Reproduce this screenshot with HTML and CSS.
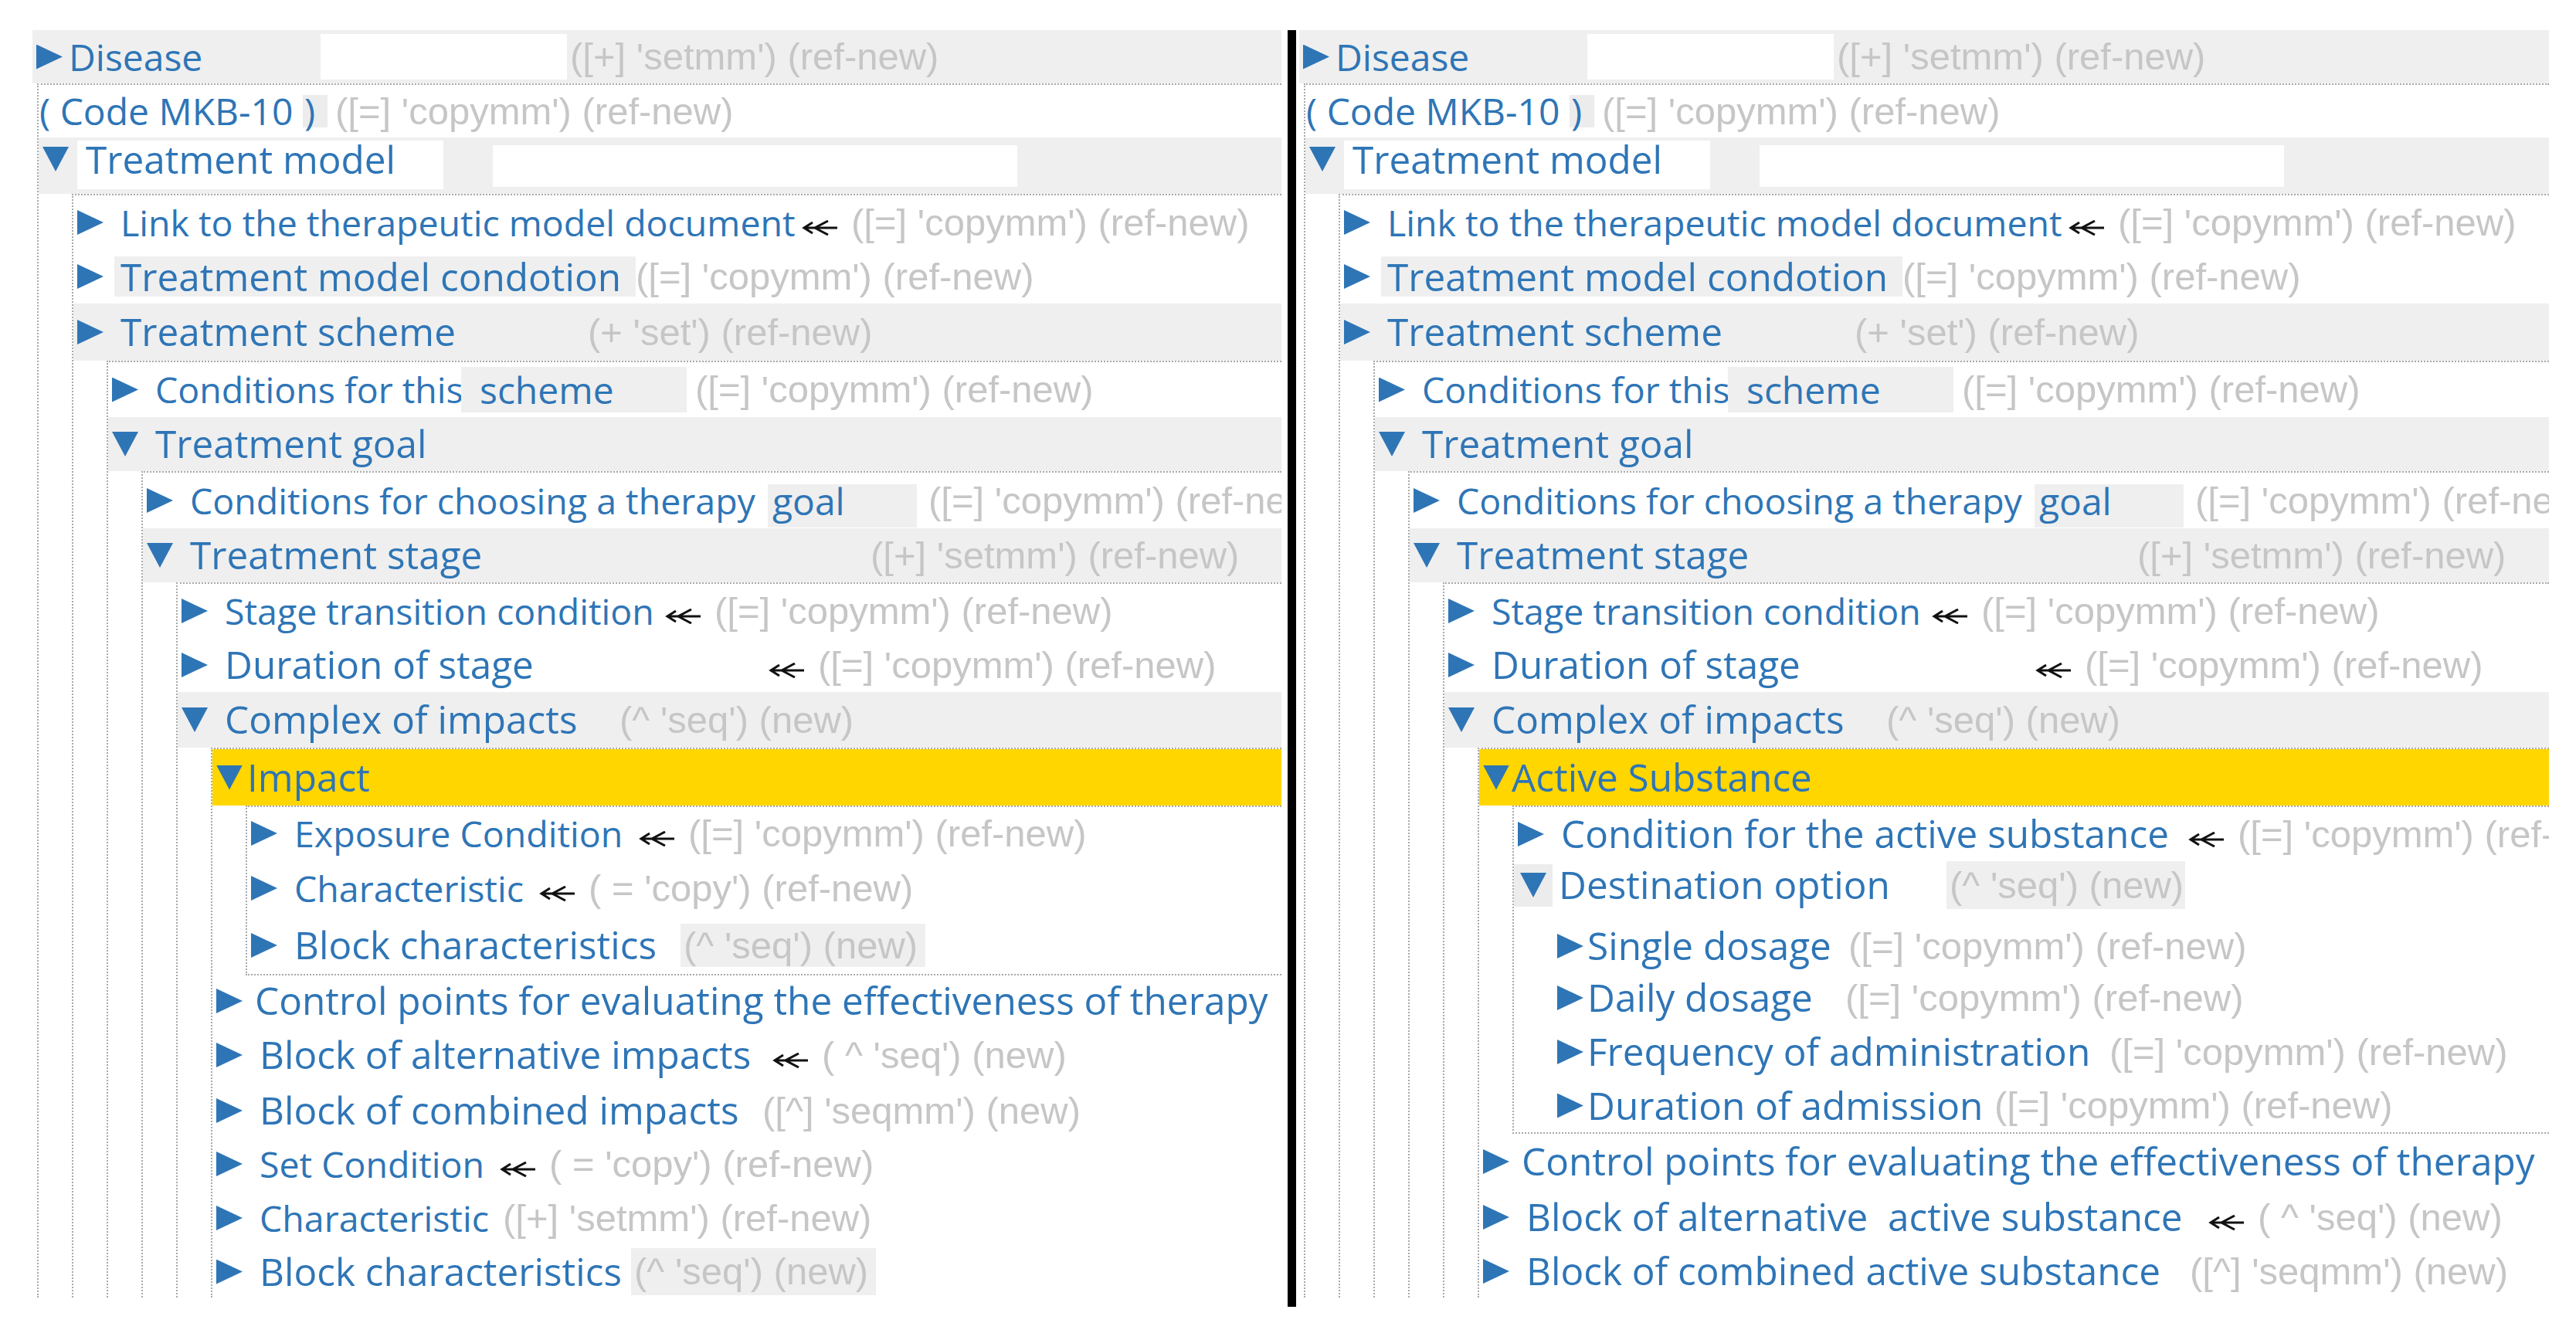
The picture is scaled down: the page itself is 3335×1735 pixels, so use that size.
FILE: index.html
```html
<!DOCTYPE html>
<html lang="en">
<head>
<meta charset="utf-8">
<title>Treatment model tree</title>
<link rel="stylesheet" href="styles.css">
</head>
<body>
<div class="screen">

  <section class="panel">
    <div class="row h69 shade n-disease">
      <span class="tri r"></span><span class="lbl">Disease</span><span class="field"></span><span class="meta">([+] 'setmm') (ref-new)</span>
    </div>
    <div class="kids top">
      <div class="row h68 n-code">
        <span class="lbl">( Code MKB-10 <span class="pbox">)</span></span><span class="meta">([=] 'copymm') (ref-new)</span>
      </div>
      <div class="row h73 shade n-model">
        <span class="tri d"></span><span class="lbl">Treatment model</span><span class="field"></span>
      </div>
      <div class="kids">
        <div class="row n-link">
          <span class="tri r"></span><span class="lbl alt">Link to the therapeutic model document</span><svg class="arrow" viewBox="0 0 48 20"><path d="M3 10H46M14 3 3 10l11 7M34 1 17 10l17 9"/></svg><span class="meta">([=] 'copymm') (ref-new)</span>
        </div>
        <div class="row n-cond">
          <span class="tri r"></span><span class="lbl">Treatment model condotion</span><span class="meta">([=] 'copymm') (ref-new)</span>
        </div>
        <div class="row h74 shade n-scheme">
          <span class="tri r"></span><span class="lbl">Treatment scheme</span><span class="meta">(+ 'set') (ref-new)</span>
        </div>
        <div class="kids">
          <div class="row h71 n-forthis">
            <span class="tri r"></span><span class="lbl alt">Conditions for this</span><span class="chip chip-scheme">scheme</span><span class="meta">([=] 'copymm') (ref-new)</span>
          </div>
          <div class="row shade">
            <span class="tri d"></span><span class="lbl">Treatment goal</span>
          </div>
          <div class="kids">
            <div class="row h72 n-choose">
              <span class="tri r"></span><span class="lbl alt">Conditions for choosing a therapy</span><span class="chip chip-goal">goal</span><span class="meta">([=] 'copymm') (ref-new)</span>
            </div>
            <div class="row shade n-stage">
              <span class="tri d"></span><span class="lbl">Treatment stage</span><span class="meta">([+] 'setmm') (ref-new)</span>
            </div>
            <div class="kids">
              <div class="row n-trans">
                <span class="tri r"></span><span class="lbl alt">Stage transition condition</span><svg class="arrow" viewBox="0 0 48 20"><path d="M3 10H46M14 3 3 10l11 7M34 1 17 10l17 9"/></svg><span class="meta">([=] 'copymm') (ref-new)</span>
              </div>
              <div class="row n-dur">
                <span class="tri r"></span><span class="lbl">Duration of stage</span><svg class="arrow" viewBox="0 0 48 20"><path d="M3 10H46M14 3 3 10l11 7M34 1 17 10l17 9"/></svg><span class="meta">([=] 'copymm') (ref-new)</span>
              </div>
              <div class="row h72 shade n-complex">
                <span class="tri d"></span><span class="lbl">Complex of impacts</span><span class="meta">(^ 'seq') (new)</span>
              </div>
              <div class="kids">
                <div class="row h73 sel n-impact">
                  <span class="tri d"></span><span class="lbl">Impact</span>
                </div>
                <div class="kids closed">
                  <div class="row h68 n-expo">
                    <span class="tri r"></span><span class="lbl alt">Exposure Condition</span><svg class="arrow" viewBox="0 0 48 20"><path d="M3 10H46M14 3 3 10l11 7M34 1 17 10l17 9"/></svg><span class="meta">([=] 'copymm') (ref-new)</span>
                  </div>
                  <div class="row h74 n-char">
                    <span class="tri r"></span><span class="lbl alt">Characteristic</span><svg class="arrow" viewBox="0 0 48 20"><path d="M3 10H46M14 3 3 10l11 7M34 1 17 10l17 9"/></svg><span class="meta">( = 'copy') (ref-new)</span>
                  </div>
                  <div class="row h74 n-blockc">
                    <span class="tri r"></span><span class="lbl">Block characteristics</span><span class="meta boxed">(^ 'seq') (new)</span>
                  </div>
                </div>
                <div class="row h66 n-control">
                  <span class="tri r"></span><span class="lbl">Control points for evaluating the effectiveness of therapy</span>
                </div>
                <div class="row h74 n-alt">
                  <span class="tri r"></span><span class="lbl">Block of alternative impacts</span><svg class="arrow" viewBox="0 0 48 20"><path d="M3 10H46M14 3 3 10l11 7M34 1 17 10l17 9"/></svg><span class="meta">( ^ 'seq') (new)</span>
                </div>
                <div class="row n-comb">
                  <span class="tri r"></span><span class="lbl">Block of combined impacts</span><span class="meta">([^] 'seqmm') (new)</span>
                </div>
                <div class="row h68 n-set">
                  <span class="tri r"></span><span class="lbl alt">Set Condition</span><svg class="arrow" viewBox="0 0 48 20"><path d="M3 10H46M14 3 3 10l11 7M34 1 17 10l17 9"/></svg><span class="meta">( = 'copy') (ref-new)</span>
                </div>
                <div class="row h72 n-char2">
                  <span class="tri r"></span><span class="lbl alt">Characteristic</span><span class="meta">([+] 'setmm') (ref-new)</span>
                </div>
                <div class="row h67 n-blockc2">
                  <span class="tri r"></span><span class="lbl">Block characteristics</span><span class="meta boxed">(^ 'seq') (new)</span>
                </div>
              </div>
            </div>
          </div>
        </div>
      </div>
    </div>
  </section>

  <div class="divider"></div>

  <section class="panel right">
    <div class="row h69 shade n-disease">
      <span class="tri r"></span><span class="lbl">Disease</span><span class="field"></span><span class="meta">([+] 'setmm') (ref-new)</span>
    </div>
    <div class="kids top">
      <div class="row h68 n-code">
        <span class="lbl">( Code MKB-10 <span class="pbox">)</span></span><span class="meta">([=] 'copymm') (ref-new)</span>
      </div>
      <div class="row h73 shade n-model">
        <span class="tri d"></span><span class="lbl">Treatment model</span><span class="field"></span>
      </div>
      <div class="kids">
        <div class="row n-link">
          <span class="tri r"></span><span class="lbl alt">Link to the therapeutic model document</span><svg class="arrow" viewBox="0 0 48 20"><path d="M3 10H46M14 3 3 10l11 7M34 1 17 10l17 9"/></svg><span class="meta">([=] 'copymm') (ref-new)</span>
        </div>
        <div class="row n-cond">
          <span class="tri r"></span><span class="lbl">Treatment model condotion</span><span class="meta">([=] 'copymm') (ref-new)</span>
        </div>
        <div class="row h74 shade n-scheme">
          <span class="tri r"></span><span class="lbl">Treatment scheme</span><span class="meta">(+ 'set') (ref-new)</span>
        </div>
        <div class="kids">
          <div class="row h71 n-forthis">
            <span class="tri r"></span><span class="lbl alt">Conditions for this</span><span class="chip chip-scheme">scheme</span><span class="meta">([=] 'copymm') (ref-new)</span>
          </div>
          <div class="row shade">
            <span class="tri d"></span><span class="lbl">Treatment goal</span>
          </div>
          <div class="kids">
            <div class="row h72 n-choose">
              <span class="tri r"></span><span class="lbl alt">Conditions for choosing a therapy</span><span class="chip chip-goal">goal</span><span class="meta">([=] 'copymm') (ref-new)</span>
            </div>
            <div class="row shade n-stage">
              <span class="tri d"></span><span class="lbl">Treatment stage</span><span class="meta">([+] 'setmm') (ref-new)</span>
            </div>
            <div class="kids">
              <div class="row n-trans">
                <span class="tri r"></span><span class="lbl alt">Stage transition condition</span><svg class="arrow" viewBox="0 0 48 20"><path d="M3 10H46M14 3 3 10l11 7M34 1 17 10l17 9"/></svg><span class="meta">([=] 'copymm') (ref-new)</span>
              </div>
              <div class="row n-dur">
                <span class="tri r"></span><span class="lbl">Duration of stage</span><svg class="arrow" viewBox="0 0 48 20"><path d="M3 10H46M14 3 3 10l11 7M34 1 17 10l17 9"/></svg><span class="meta">([=] 'copymm') (ref-new)</span>
              </div>
              <div class="row h72 shade n-complex">
                <span class="tri d"></span><span class="lbl">Complex of impacts</span><span class="meta">(^ 'seq') (new)</span>
              </div>
              <div class="kids">
                <div class="row h73 sel n-active">
                  <span class="tri d"></span><span class="lbl">Active Substance</span>
                </div>
                <div class="kids closed">
                  <div class="row n-condact">
                    <span class="tri r"></span><span class="lbl">Condition for the active substance</span><svg class="arrow" viewBox="0 0 48 20"><path d="M3 10H46M14 3 3 10l11 7M34 1 17 10l17 9"/></svg><span class="meta">([=] 'copymm') (ref-new)</span>
                  </div>
                  <div class="row h62 n-dest">
                    <span class="tbox"><span class="tri d"></span></span><span class="lbl">Destination option</span><span class="meta boxed">(^ 'seq') (new)</span>
                  </div>
                  <div class="sub">
                    <div class="row h64 n-single">
                      <span class="tri r"></span><span class="lbl">Single dosage</span><span class="meta">([=] 'copymm') (ref-new)</span>
                    </div>
                    <div class="row n-daily">
                      <span class="tri r"></span><span class="lbl">Daily dosage</span><span class="meta">([=] 'copymm') (ref-new)</span>
                    </div>
                    <div class="row n-freq">
                      <span class="tri r"></span><span class="lbl">Frequency of administration</span><span class="meta">([=] 'copymm') (ref-new)</span>
                    </div>
                    <div class="row h69 n-duradm">
                      <span class="tri r"></span><span class="lbl">Duration of admission</span><span class="meta">([=] 'copymm') (ref-new)</span>
                    </div>
                  </div>
                </div>
                <div class="row h72 n-control">
                  <span class="tri r"></span><span class="lbl">Control points for evaluating the effectiveness of therapy</span>
                </div>
                <div class="row h72 n-alt2">
                  <span class="tri r"></span><span class="lbl">Block of alternative&nbsp; active substance</span><svg class="arrow" viewBox="0 0 48 20"><path d="M3 10H46M14 3 3 10l11 7M34 1 17 10l17 9"/></svg><span class="meta">( ^ 'seq') (new)</span>
                </div>
                <div class="row h68 n-comb2">
                  <span class="tri r"></span><span class="lbl">Block of combined active substance</span><span class="meta">([^] 'seqmm') (new)</span>
                </div>
              </div>
            </div>
          </div>
        </div>
      </div>
    </div>
  </section>

</div>
</body>
</html>
```

FILE: styles.css
```css
* { box-sizing: border-box; margin: 0; padding: 0; }

html, body { background: #fff; }

body {
  width: 3335px;
  height: 1735px;
  overflow: hidden;
  font-family: "Open Sans", "Noto Sans", sans-serif;
}

.screen {
  display: flex;
  align-items: flex-start;
  padding: 39px 0 0 42px;
}

.panel {
  flex: none;
  width: 1617px;
  height: 1641px;
  overflow: hidden;
}
.panel.right { width: 1618px; margin-left: 4px; }

.divider {
  flex: none;
  width: 11px;
  height: 1653px;
  margin-left: 8px;
  background: #000;
}

/* tree levels */
.kids {
  margin-left: 43px;
  border-left: 2px dotted #a9a9a9;
  border-top: 2px dotted #a9a9a9;
}
.kids.top { margin-left: 6px; }
.kids.closed { border-bottom: 2px dotted #a9a9a9; }
.sub { margin-left: 51px; padding-top: 16px; }

/* rows */
.row {
  display: flex;
  align-items: center;
  height: 70px;
  padding-left: 5px;
  white-space: nowrap;
}
.h62 { height: 62px; }
.h64 { height: 64px; }
.h66 { height: 66px; }
.h67 { height: 67px; }
.h68 { height: 68px; }
.h69 { height: 69px; }
.h71 { height: 71px; }
.h72 { height: 72px; }
.h73 { height: 73px; }
.h74 { height: 74px; }

.shade { background: #efefef; }
.sel { background: #ffd600; }

.tri {
  flex: none;
  width: 34px;
  height: 32px;
  background: #2e75b6;
}
.tri.r { clip-path: polygon(0 0, 100% 50%, 0 100%); }
.tri.d { clip-path: polygon(0 0, 100% 0, 50% 100%); }

.tbox {
  flex: none;
  display: flex;
  align-items: center;
  justify-content: center;
  width: 50px;
  height: 55px;
  background: #ececec;
}

.lbl {
  flex: none;
  margin-left: 22px;
  color: #2e75b6;
  font-size: 49.5px;
  line-height: 1;
}
.lbl.alt { font-size: 46.5px; }

.meta {
  flex: none;
  font-family: "Liberation Sans", Arial, sans-serif;
  font-size: 49px;
  line-height: 1;
  color: #c6c6c6;
}
.meta.boxed {
  background: #efefef;
  padding-left: 4px;
  width: 317px;
  height: 56px;
  line-height: 56px;
}

.arrow {
  flex: none;
  width: 48px;
  height: 20px;
  margin-top: 14px;
  fill: none;
  stroke: #111;
  stroke-width: 3;
}
.arrow + .meta { margin-left: 16px; }

.field { flex: none; background: #fff; }

.chip {
  flex: none;
  background: #efefef;
  color: #2e75b6;
  font-size: 48px;
}
.chip-scheme {
  width: 292px;
  height: 59px;
  line-height: 59px;
  padding-left: 24px;
}
.chip-goal {
  align-self: flex-end;
  width: 193px;
  height: 56px;
  line-height: 44px;
  padding-left: 6px;
  margin-bottom: 1px;
}

.pbox {
  display: inline-block;
  height: 42px;
  line-height: 42px;
  padding: 0 16px 0 2px;
  background: #ececec;
}

/* node specific geometry */
.n-disease .lbl { margin-left: 8px; width: 326px; font-size: 48px; }
.n-disease .field { width: 319px; height: 59px; }
.n-disease .meta { margin-left: 4px; }

.n-code { padding-left: 1px; }
.n-code .lbl { margin-left: 0; width: 383px; font-size: 48px; }

.n-model { align-items: flex-start; padding-top: 4px; }
.n-model .tri { margin-top: 8px; }
.n-model .lbl {
  background: #fff;
  width: 474px;
  height: 63px;
  line-height: 48px;
  margin-left: 11px;
  padding-left: 11px;
}
.n-model .field { width: 679px; height: 54px; margin-left: 64px; margin-top: 6px; }

.n-link .lbl { width: 882px; }
.n-cond .lbl {
  background: #efefef;
  width: 675px;
  height: 52px;
  line-height: 52px;
  margin-left: 14px;
  padding-left: 8px;
}
.n-scheme .lbl { width: 605px; }
.n-forthis .lbl { width: 396px; }
.n-forthis .meta { margin-left: 11px; }
.n-choose .lbl { width: 748px; }
.n-choose .meta { margin-left: 15px; }
.n-stage .lbl { width: 881px; }
.n-trans .lbl { width: 570px; }
.n-dur .lbl { width: 704px; }
.n-complex .lbl { width: 511px; }
.n-impact .lbl { margin-left: 6px; }
.n-expo .lbl { width: 446px; }
.n-char .lbl { width: 317px; }
.n-blockc .lbl { width: 500px; }
.n-control .lbl { margin-left: 16px; }
.n-alt .lbl { width: 664px; }
.n-comb .lbl { width: 651px; }
.n-set .lbl { width: 311px; }
.n-char2 .lbl { width: 315px; }
.n-blockc2 .lbl { width: 481px; }
.n-blockc2 .meta.boxed { height: 61px; line-height: 61px; }

.n-active .lbl { margin-left: 3px; }
.n-condact .lbl { width: 812px; }
.n-dest { padding-left: 0; }
.n-dest .lbl { margin-left: 8px; width: 502px; }
.n-dest .meta.boxed { width: 309px; height: 62px; line-height: 62px; }
.n-single .lbl, .n-daily .lbl, .n-freq .lbl, .n-duradm .lbl { margin-left: 5px; }
.n-single .lbl { width: 338px; }
.n-daily .lbl { width: 334px; }
.n-freq .lbl { width: 676px; }
.n-duradm .lbl { width: 527px; }
.n-alt2 .lbl { width: 883px; }
.n-comb2 .lbl { width: 859px; }
```
